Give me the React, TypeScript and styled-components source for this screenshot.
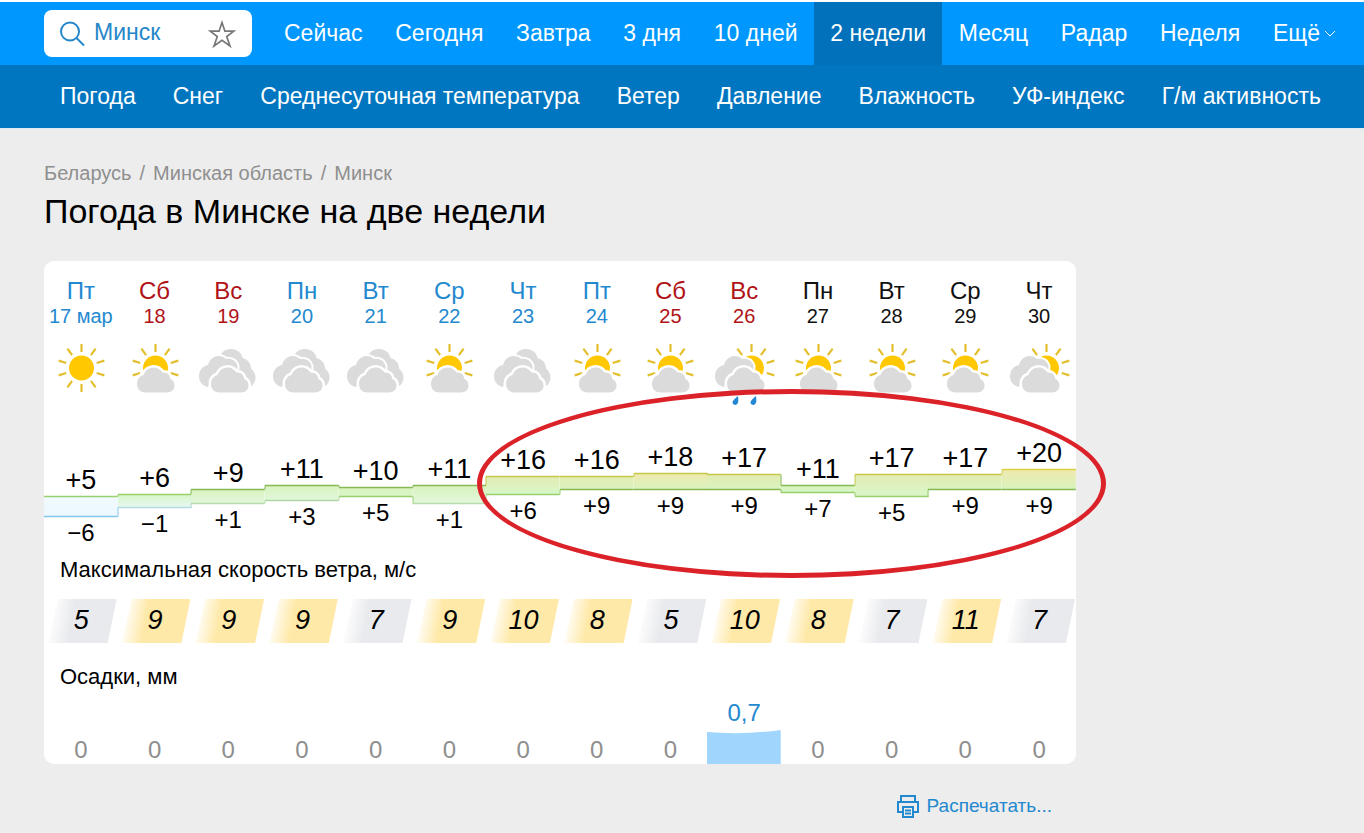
import React from "react";
import styled, { createGlobalStyle, css } from "styled-components";

const GlobalStyle = createGlobalStyle`
  *, *::before, *::after { box-sizing: border-box; }
  body {
    margin: 0;
    background: #ededed;
    color: #000;
    font-family: "Liberation Sans", Arial, sans-serif;
  }
  a { color: inherit; text-decoration: none; }
`;

const Header = styled.header`
  border-top: 2px solid #fff;
  border-bottom: 1px solid #dcebf4;
  color: #fff;
  font-size: 23px;
  line-height: 28px;
`;

const TopBar = styled.div`
  display: flex;
  height: 63px;
  padding: 0 12px 0 44px;
  background: #0098ff;
  white-space: nowrap;
`;

const Search = styled.form`
  display: flex;
  flex: none;
  align-items: center;
  align-self: center;
  width: 208px;
  height: 47px;
  margin-right: 16px;
  padding: 0 16px 0 15px;
  border-radius: 8px;
  background: #fff;
`;

const SearchInput = styled.input`
  flex: 1;
  min-width: 0;
  margin: 0 0 3px 9px;
  padding: 0;
  border: 0;
  outline: 0;
  background: none;
  color: #2586c9;
  font: inherit;
`;

const IconButton = styled.button`
  display: flex;
  padding: 0;
  border: 0;
  background: none;
  color: #777;
`;

const PeriodNav = styled.nav`
  display: flex;
  flex: 1;
  justify-content: space-between;
`;

const PeriodLink = styled.a<{ $active?: boolean }>`
  display: flex;
  align-items: center;
  gap: 4px;
  padding: 0 16px 2px;
  ${(p) => p.$active && css`background: #0071ba;`}
`;

const SubNav = styled.nav`
  display: flex;
  align-items: center;
  justify-content: space-between;
  height: 63px;
  padding: 0 43px 2px 60px;
  background: #0076c0;
  white-space: nowrap;
`;

const Page = styled.main`
  display: grid;
  grid-template-columns: minmax(0, 1fr) 244px;
  padding: 31px 44px 12px;
`;

const Breadcrumbs = styled.nav`
  display: flex;
  gap: 8px;
  color: #8f8f8f;
  font-size: 20px;
  line-height: 26px;
`;

const Title = styled.h1`
  margin: 4px 0 29px;
  font-size: 34px;
  font-weight: 400;
  line-height: 42px;
`;

const Card = styled.section`
  position: relative;
  border-radius: 10px;
  background: #fff;
`;

const Forecast = styled.table`
  width: 100%;
  border-collapse: collapse;
  table-layout: fixed;
  text-align: center;

  th, td { padding: 0; font-weight: 400; }
`;

type Tone = "blue" | "red" | "black";
const tones: Record<Tone, string> = { blue: "#2389cf", red: "#b01217", black: "#111" };

const DayCell = styled.th<{ $tone: Tone }>`
  height: 74px;
  vertical-align: bottom;
  color: ${(p) => tones[p.$tone]};
  white-space: nowrap;
`;

const WeekDay = styled.div`
  font-size: 24px;
  line-height: 26px;
`;

const DateText = styled.div`
  height: 31px;
  font-size: 20px;
  line-height: 24px;
`;

const IconCell = styled.td`
  height: 93px;
  vertical-align: top;

  svg { display: block; margin: 5px auto 0; overflow: visible; }
`;

const TempCell = styled.td`
  position: relative;
  height: 130px;
  vertical-align: top;
`;

const TempPlot = styled.svg`
  position: absolute;
  inset: 0;
  width: 100%;
  height: 130px;
  overflow: visible;
`;

const TempText = styled.div`
  position: relative;
`;

const MaxTemp = styled.div`
  font-size: 27px;
  line-height: 32px;
`;

const MinTemp = styled.div`
  font-size: 24px;
  line-height: 32px;
`;

const RowTitle = styled.th<{ $tight?: boolean }>`
  height: ${(p) => (p.$tight ? 31 : 41)}px;
  text-align: left;
  vertical-align: top;
  font-size: 22px;
  line-height: 24px;

  && { padding-left: 16px; }
`;

const WindCell = styled.td`
  height: 66px;
  vertical-align: top;
`;

const WindValue = styled.div<{ $strong: boolean }>`
  height: 44px;
  padding-right: 2px;
  margin: 0 1px 0 4px;
  clip-path: polygon(10px 0, 100% 0, calc(100% - 9px) 100%, 0 100%);
  background: linear-gradient(100deg, #fff 6%, ${(p) => (p.$strong ? "#ffe9a8" : "#e9eaed")} 36%);
  font-size: 27px;
  font-style: italic;
  line-height: 42px;
`;

const RainCell = styled.td`
  height: 68px;
  vertical-align: bottom;
  color: #8e8e8e;
  font-size: 24px;
  line-height: 29px;
`;

const RainAmount = styled.div`
  color: #2389cf;
  line-height: 34px;
`;

const RainBar = styled.svg`
  display: block;
  width: 100%;
  height: 34px;
`;

const Marker = styled.div`
  position: absolute;
  top: 128px;
  right: -30px;
  left: 42%;
  height: 189px;
  border: 5px solid #dc2229;
  border-radius: 50%;
  pointer-events: none;
`;

const PrintLink = styled.a`
  display: flex;
  align-items: center;
  justify-content: flex-end;
  gap: 8px;
  margin: 30px 24px 0 0;
  color: #2389cf;
  font-size: 19px;
  line-height: 24px;
`;

type Sky = "sun" | "partly" | "clouds" | "mostly" | "rain";

interface Day {
  name: string;
  date: string;
  tone: Tone;
  sky: Sky;
  max: number;
  min: number;
  wind: number;
  rain: string;
}

const days: Day[] = [
  { name: "Пт", date: "17 мар", tone: "blue", sky: "sun", max: 5, min: -6, wind: 5, rain: "0" },
  { name: "Сб", date: "18", tone: "red", sky: "partly", max: 6, min: -1, wind: 9, rain: "0" },
  { name: "Вс", date: "19", tone: "red", sky: "clouds", max: 9, min: 1, wind: 9, rain: "0" },
  { name: "Пн", date: "20", tone: "blue", sky: "clouds", max: 11, min: 3, wind: 9, rain: "0" },
  { name: "Вт", date: "21", tone: "blue", sky: "clouds", max: 10, min: 5, wind: 7, rain: "0" },
  { name: "Ср", date: "22", tone: "blue", sky: "partly", max: 11, min: 1, wind: 9, rain: "0" },
  { name: "Чт", date: "23", tone: "blue", sky: "clouds", max: 16, min: 6, wind: 10, rain: "0" },
  { name: "Пт", date: "24", tone: "blue", sky: "partly", max: 16, min: 9, wind: 8, rain: "0" },
  { name: "Сб", date: "25", tone: "red", sky: "partly", max: 18, min: 9, wind: 5, rain: "0" },
  { name: "Вс", date: "26", tone: "red", sky: "rain", max: 17, min: 9, wind: 10, rain: "0,7" },
  { name: "Пн", date: "27", tone: "black", sky: "partly", max: 11, min: 7, wind: 8, rain: "0" },
  { name: "Вт", date: "28", tone: "black", sky: "partly", max: 17, min: 5, wind: 7, rain: "0" },
  { name: "Ср", date: "29", tone: "black", sky: "partly", max: 17, min: 9, wind: 11, rain: "0" },
  { name: "Чт", date: "30", tone: "black", sky: "mostly", max: 20, min: 9, wind: 7, rain: "0" },
];

/* Clouds are drawn with a white outline so that they separate from what is behind. */
const CLOUD = "M9 25C3.500 25 0 21.500 0 16.500C0 12 2.500 8.500 6.500 7.500C8 3 12 0 16.500 0C20.500 0 23.500 2 25.500 5C30 4.500 33 7.500 33.300 11.500C36 12.500 37.500 15 37.500 18C37.500 22 34.500 25 30 25Z";
const LEFT_CLOUD = "M9 31C4 30 0 26 0 20.500C0 14.500 3.500 10 9 9C10.500 3.500 14.500 0 19.500 0C22.500 0 25 1 27 3C32 2 37 4.500 38.500 10L38 20H14Z";
const RIGHT_CLOUD = "M0 7C2 2.500 6 0 11 0C17 0 21.500 3.500 22.500 9C28 10.500 31 14.500 31 19.500C34 22 35.500 25 35.500 28.500C35.500 32 34 35 31.500 37L20 30Z";

const Rays = ({ angles }: { angles: number[] }) => (
  <g stroke="#e3bf2e" strokeWidth="2.2">
    {angles.map((a) => (
      <path key={a} d="M0 -16V-24" transform={`rotate(${a})`} />
    ))}
  </g>
);

const allRays = [0, 36, 72, 108, 144, 180, 216, 252, 288, 324];

const FrontCloud = ({ x }: { x: number }) => (
  <g transform={`translate(${x} 27.500)`}>
    <path d={CLOUD} fill="#dbdbdb" stroke="#fff" strokeWidth="5" paintOrder="stroke" />
  </g>
);

const SkyIcon = ({ sky }: { sky: Sky }) => {
  const broken = sky === "mostly" || sky === "rain";
  return (
    <svg width="60" height="60" viewBox="0 0 60 60" aria-hidden="true">
      {(sky === "sun" || sky === "partly") && (
        <g transform="translate(30.500 28)">
          <Rays angles={sky === "sun" ? allRays : [0, 36, 72, 108, 252, 288, 324]} />
          <circle r="12.500" fill="#ffc800" />
        </g>
      )}
      {broken && (
        <g transform="translate(37.500 28)">
          <Rays angles={[0, 36, 72, 108, 324]} />
          <circle r="12.500" fill="#ffc800" />
        </g>
      )}
      {sky === "clouds" && <path d={RIGHT_CLOUD} transform="translate(22 9)" fill="#dbdbdb" />}
      {(broken || sky === "clouds") && (
        <path
          d={LEFT_CLOUD}
          transform="translate(1 16)"
          fill="#dbdbdb"
          stroke="#fff"
          strokeWidth="4"
          paintOrder="stroke"
        />
      )}
      {sky !== "sun" && <FrontCloud x={sky === "partly" ? 12 : 13} />}
      {sky === "rain" && (
        <g fill="#2389d2">
          <path d="M24 56C21 58.500 18.500 60.500 18.500 62.500C18.500 64 20 65 21.500 65C25 64 24.500 60 24 56Z" />
          <path d="M42 56C39 58.500 36.500 60.500 36.500 62.500C36.500 64 38 65 39.500 65C43 64 42.500 60 42 56Z" />
        </g>
      )}
    </svg>
  );
};

/* Temperature to height inside the row, shared by the steps and the labels. */
const level = (t: number) => Math.round(77 - 1.8 * t) + 0.5;

const lineColor = (t: number) =>
  t >= 19 ? "#dccf48" : t >= 15 ? "#c6c84a" : t >= 9 ? "#86b854" : t >= 5 ? "#97d06c" : t >= 3 ? "#b0d6a4" : t >= 1 ? "#b6dcae" : t >= -1 ? "#b5dce0" : "#82c8ec";

const fillColor = (t: number) =>
  t >= 18 ? "#efe9ae" : t >= 15 ? "#e4ecb4" : t >= 9 ? "#d9f3be" : t >= 6 ? "#d6f7c8" : t >= 5 ? "#d8f6c8" : t >= 1 ? "#e2f7dc" : t >= -1 ? "#e8f7f2" : "#ecf8fe";

const TempStep = ({ day, prev, id }: { day: Day; prev?: Day; id: string }) => {
  const top = level(day.max);
  const bottom = level(day.min);
  return (
    <TempPlot aria-hidden="true">
      <defs>
        <linearGradient id={id} x1="0" y1="0" x2="0" y2="1">
          <stop offset="0" stopColor={day.min < -1 ? "#f0faff" : fillColor(day.max)} />
          <stop offset="1" stopColor={fillColor(day.min)} />
        </linearGradient>
      </defs>
      <rect y={top} width="100%" height={bottom - top} fill={`url(#${id})`} />
      <g strokeWidth="1.6">
        <line x1="0" x2="100%" y1={top} y2={top} stroke={lineColor(day.max)} />
        <line x1="0" x2="100%" y1={bottom} y2={bottom} stroke={lineColor(day.min)} />
      </g>
      {prev && (
        <g strokeWidth="1">
          <line x1="0" x2="0" y1={level(prev.max)} y2={top} stroke={lineColor(day.max)} />
          <line x1="0" x2="0" y1={level(prev.min)} y2={bottom} stroke={lineColor(prev.min)} />
        </g>
      )}
    </TempPlot>
  );
};

const signed = (t: number) => (t < 0 ? `−${-t}` : `+${t}`);

const periods = ["Сейчас", "Сегодня", "Завтра", "3 дня", "10 дней", "2 недели", "Месяц", "Радар", "Неделя"];
const sections = ["Погода", "Снег", "Среднесуточная температура", "Ветер", "Давление", "Влажность", "УФ-индекс", "Г/м активность"];

export default function App() {
  return (
    <>
      <GlobalStyle />
      <Header>
        <TopBar>
          <Search>
            <svg width="26" height="26" viewBox="0 0 26 26" fill="none" stroke="#2586c9" strokeWidth="2" aria-hidden="true">
              <circle cx="11" cy="10.500" r="9" />
              <path d="M17.500 17L25 24.500" />
            </svg>
            <SearchInput type="text" aria-label="Город" defaultValue="Минск" />
            <IconButton type="button" aria-label="Добавить в избранное">
              <svg width="28" height="28" viewBox="0 0 28 28" fill="none" stroke="currentColor" strokeWidth="1.7">
                <path d="M14 2.500L16.900 11.200H25.800L18.700 16.500L22 26L14 20.200L6 26L9.300 16.500L2.200 11.200H11.100Z" />
              </svg>
            </IconButton>
          </Search>
          <PeriodNav aria-label="Период">
            {periods.map((p) => (
              <PeriodLink key={p} href="#" $active={p === "2 недели"}>
                {p}
              </PeriodLink>
            ))}
            <PeriodLink href="#">
              Ещё
              <svg width="12" height="8" viewBox="0 0 12 8" fill="none" stroke="currentColor" aria-hidden="true">
                <path d="M1 2L6 7L11 2" />
              </svg>
            </PeriodLink>
          </PeriodNav>
        </TopBar>
        <SubNav aria-label="Разделы">
          {sections.map((s) => (
            <a key={s} href="#">{s}</a>
          ))}
        </SubNav>
      </Header>

      <Page>
        <div>
          <Breadcrumbs aria-label="Навигация">
            <a href="#">Беларусь</a>
            <span>/</span>
            <a href="#">Минская область</a>
            <span>/</span>
            <a href="#">Минск</a>
          </Breadcrumbs>
          <Title>Погода в Минске на две недели</Title>

          <Card>
            <Forecast>
              <thead>
                <tr>
                  {days.map((d) => (
                    <DayCell key={d.date} $tone={d.tone} scope="col">
                      <WeekDay>{d.name}</WeekDay>
                      <DateText>{d.date}</DateText>
                    </DayCell>
                  ))}
                </tr>
              </thead>
              <tbody>
                <tr>
                  {days.map((d) => (
                    <IconCell key={d.date}>
                      <SkyIcon sky={d.sky} />
                    </IconCell>
                  ))}
                </tr>
                <tr>
                  {days.map((d, i) => (
                    <TempCell key={d.date}>
                      <TempStep day={d} prev={days[i - 1]} id={`band-${i}`} />
                      <TempText>
                        <MaxTemp style={{ marginTop: level(d.max) - 32.5 }}>{signed(d.max)}</MaxTemp>
                        <MinTemp style={{ marginTop: level(d.min) - level(d.max) + 1 }}>{signed(d.min)}</MinTemp>
                      </TempText>
                    </TempCell>
                  ))}
                </tr>
                <tr>
                  <RowTitle colSpan={14}>Максимальная скорость ветра, м/с</RowTitle>
                </tr>
                <tr>
                  {days.map((d) => (
                    <WindCell key={d.date}>
                      <WindValue $strong={d.wind >= 8}>{d.wind}</WindValue>
                    </WindCell>
                  ))}
                </tr>
                <tr>
                  <RowTitle colSpan={14} $tight>Осадки, мм</RowTitle>
                </tr>
                <tr>
                  {days.map((d) => (
                    <RainCell key={d.date}>
                      {d.rain === "0" ? (
                        d.rain
                      ) : (
                        <>
                          <RainAmount>{d.rain}</RainAmount>
                          <RainBar viewBox="0 0 74 34" preserveAspectRatio="none" aria-hidden="true">
                            <path d="M0 2Q37 5 74 0V34H0Z" fill="#a0d6fd" />
                          </RainBar>
                        </>
                      )}
                    </RainCell>
                  ))}
                </tr>
              </tbody>
            </Forecast>
            <Marker />
          </Card>

          <PrintLink href="#">
            <svg width="22" height="23" viewBox="0 0 22 23" fill="none" stroke="currentColor" strokeWidth="2" aria-hidden="true">
              <path d="M4 7V1H18V7M5 17H1V7H21V17H17" />
              <path d="M6 12H16V22H6ZM8 15.500H14M8 18.500H14" />
            </svg>
            Распечатать...
          </PrintLink>
        </div>
      </Page>
    </>
  );
}
